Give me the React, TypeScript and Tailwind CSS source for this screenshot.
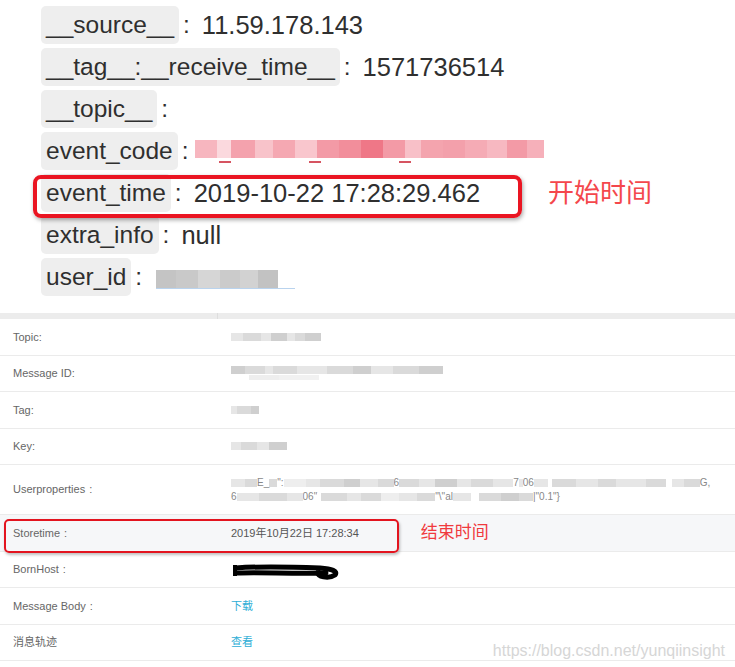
import React from "react";

type Cell = [number, string];

const Mosaic = ({ cells, h }: { cells: Cell[]; h: number }) => (
  <div className="flex blur-[0.6px]">
    {cells.map(([w, c], i) => (
      <span key={i} style={{ width: w, height: h, background: c }} />
    ))}
  </div>
);

const pink: Cell[] = [
  [22, "#f7b6bf"], [14, "#fbd9de"], [24, "#f4a2ad"], [18, "#f8c3ca"], [22, "#f5a8b2"],
  [22, "#f9c6cd"], [22, "#f39aa6"], [22, "#f28e9b"], [22, "#ef7787"], [22, "#f39aa6"],
  [16, "#f8c0c8"], [22, "#f4a4ae"], [22, "#f3a0ab"], [22, "#f5abb5"], [20, "#f7b8c1"],
  [20, "#f39aa6"], [17, "#f6b0ba"],
];

const fields = [
  { key: "__source__", value: "11.59.178.143" },
  { key: "__tag__:__receive_time__", value: "1571736514" },
  { key: "__topic__", value: "" },
  { key: "event_code", value: "pink" },
  { key: "event_time", value: "2019-10-22 17:28:29.462", note: "开始时间" },
  { key: "extra_info", value: "null" },
  { key: "user_id", value: "gray" },
];

const FieldValue = ({ value }: { value: string }) => {
  if (value === "pink")
    return (
      <div className="relative ml-[6px] -mt-[4px]">
        <Mosaic cells={pink} h={18} />
        <span className="absolute left-[24px] top-[21px] h-[2px] w-[12px] bg-[#d65461]" />
        <span className="absolute left-[114px] top-[21px] h-[2px] w-[12px] bg-[#d65461]" />
        <span className="absolute left-[204px] top-[21px] h-[2px] w-[12px] bg-[#d65461]" />
      </div>
    );
  if (value === "gray")
    return (
      <div className="ml-[14px] mt-[4px] border-b border-[#b9d3ee] pr-[17px]">
        <Mosaic
          cells={[[20, "#c4c4c4"], [22, "#c9c9c9"], [22, "#d6d6d6"], [20, "#cbcbcb"], [18, "#d2d2d2"], [20, "#c2c2c2"]]}
          h={18}
        />
      </div>
    );
  return <span className="ml-[12px] text-[25.5px]">{value}</span>;
};

const rows = [
  { label: "Topic:", kind: "topic" },
  { label: "Message ID:", kind: "msgid" },
  { label: "Tag:", kind: "tag" },
  { label: "Key:", kind: "key" },
  { label: "Userproperties", colon: true, kind: "props" },
  { label: "Storetime", colon: true, kind: "store" },
  { label: "BornHost", colon: true, kind: "host" },
  { label: "Message Body", colon: true, kind: "body" },
  { label: "消息轨迹", kind: "trace" },
];

const g1 = "#dadada";
const g2 = "#e6e6e6";
const g3 = "#cfcfcf";

const TableValue = ({ kind }: { kind: string }) => {
  switch (kind) {
    case "topic":
      return <Mosaic cells={[[12, g2], [18, g1], [10, g2], [16, g3], [8, g2], [10, g1], [16, g3]]} h={8} />;
    case "msgid":
      return (
        <div className="flex flex-col gap-[1px]">
          <Mosaic cells={[[14, g3], [20, g1], [8, g2], [24, g1], [30, g2], [26, g1], [18, g3], [22, g2], [26, g1], [24, g3]]} h={8} />
          <div className="ml-[18px]">
            <Mosaic cells={[[30, "#eeeeee"], [40, "#f1f1f1"]]} h={5} />
          </div>
        </div>
      );
    case "tag":
      return <Mosaic cells={[[6, g2], [14, g1], [8, g3]]} h={8} />;
    case "key":
      return <Mosaic cells={[[10, g2], [16, g1], [12, g2], [18, g3]]} h={8} />;
    case "props":
      return (
        <div className="flex flex-col gap-[3px] text-[10px] leading-[11px] text-[#888]">
          <div className="flex items-center whitespace-nowrap">
            <Mosaic cells={[[14, g2], [12, g1]]} h={8} />
            <span>E_</span>
            <Mosaic cells={[[8, g1]]} h={8} />
            <span>":</span>
            <Mosaic cells={[[22, "#eeeeee"], [14, g2], [24, g1], [16, g3], [18, g2], [16, g1]]} h={8} />
            <span>6</span>
            <Mosaic cells={[[20, g1], [16, g2], [22, g3], [14, g2], [22, g1], [20, g2]]} h={8} />
            <span>7</span>
            <Mosaic cells={[[4, g2]]} h={8} />
            <span>06</span>
            <Mosaic cells={[[14, g2], [4, "#fff"], [24, g1], [22, g2], [18, g1], [30, g2], [20, g1], [6, "#fff"], [12, g2], [16, g1]]} h={8} />
            <span>G,</span>
          </div>
          <div className="flex items-center whitespace-nowrap">
            <span>6</span>
            <Mosaic cells={[[22, g2], [28, g1], [16, g2]]} h={8} />
            <span>06"</span>
            <Mosaic cells={[[4, "#fff"], [26, g1], [14, g2], [20, g1], [18, "#eeeeee"], [18, g2], [18, g1]]} h={8} />
            <span>"\"al</span>
            <Mosaic cells={[[18, g2], [8, "#fff"], [22, g1], [18, g3], [14, g1]]} h={8} />
            <span>{'|"0.1"}'}</span>
          </div>
        </div>
      );
    case "store":
      return (
        <div className="flex items-center">
          <span className="text-[#555]">2019年10月22日 17:28:34</span>
          <span className="ml-[62px] text-[17px] text-[#f03a3e]">结束时间</span>
        </div>
      );
    case "host":
      return (
        <svg width="108" height="20" viewBox="0 0 108 20" className="ml-[1px] mt-[3px]">
          <path d="M3 4 L3 15" stroke="#000" strokeWidth="4" />
          <path d="M4 7 C30 5 62 6 88 7 C100 8 106 10 103 14 C97 18 84 16 86 11" stroke="#000" strokeWidth="5" fill="none" strokeLinecap="round" />
          <path d="M5 12 C30 11 60 13 94 12" stroke="#000" strokeWidth="5" fill="none" strokeLinecap="round" />
        </svg>
      );
    case "body":
      return <span className="text-[#2eaed6]">下载</span>;
    case "trace":
      return <span className="text-[#2eaed6]">查看</span>;
  }
  return null;
};

export default function App() {
  return (
    <div className="relative h-[667px] w-[735px] overflow-hidden bg-white font-['Liberation_Sans','Noto_Sans_CJK_SC',sans-serif]">
      <section className="flex flex-col gap-[4px] pl-[41px] pt-[6px] text-[24.5px] text-[#2f2f2f]">
        {fields.map((f) => (
          <div key={f.key} className="flex h-[38px] items-center">
            <span className="flex h-full items-center rounded-[5px] bg-[#eeeeee] px-[5px]">{f.key}</span>
            <span className="ml-[4px]">:</span>
            <FieldValue value={f.value} />
            {f.note && <span className="ml-[68px] text-[26px] text-[#f4474c]">{f.note}</span>}
          </div>
        ))}
      </section>

      <div className="mt-[17px] flex h-[6px] bg-[#ececec]">
        <div className="w-[218px] border-r border-[#dedede]" />
      </div>

      <div className="text-[11px] text-[#666]">
        {rows.map((r) => (
          <div
            key={r.label}
            className={`flex items-center border-b border-[#ebebeb] ${r.kind === "props" ? "h-[50px]" : "h-[36.5px]"} ${r.kind === "store" ? "bg-[#f6f7f9]" : ""}`}
          >
            <div className="w-[218px] shrink-0 pl-[13px]">
              {r.label}
              {r.colon && <span className="ml-[4px]">:</span>}
            </div>
            <div className="min-w-0 flex-1 pl-[13px]">
              <TableValue kind={r.kind} />
            </div>
          </div>
        ))}
      </div>

      {/* annotation frames */}
      <div className="absolute left-[33px] top-[175px] h-[43px] w-[489px] rounded-[8px] border-[4px] border-[#ea1522] shadow-[1px_2px_4px_rgba(0,0,0,0.35)]" />
      <div className="absolute left-[4px] top-[519px] h-[34px] w-[395px] rounded-[5px] border-[2px] border-[#e3141f] shadow-[1px_2px_3px_rgba(0,0,0,0.25)]" />

      <div className="absolute right-[10px] top-[639px] text-[16px] text-[#d6d6d6]">https://blog.csdn.net/yunqiinsight</div>
    </div>
  );
}
